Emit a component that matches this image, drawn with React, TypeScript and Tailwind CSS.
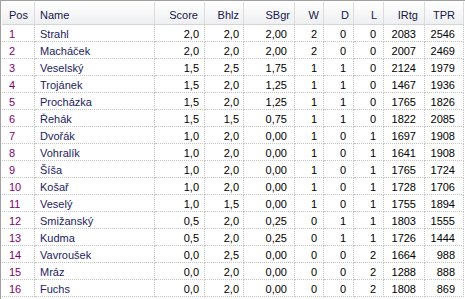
import React from "react";

type Col = { key: string; label: string; w: string; head: string; cell: string };

const cols: Col[] = [
  { key: "pos", label: "Pos", w: "33px", head: "justify-start pl-[7px]", cell: "justify-start pl-[7px] text-[#800070]" },
  { key: "name", label: "Name", w: "120px", head: "justify-start pl-[5px]", cell: "justify-start pl-[5px] text-[#1c1c5e]" },
  { key: "score", label: "Score", w: "50px", head: "justify-end pr-[6px]", cell: "justify-end pr-[5px]" },
  { key: "bhlz", label: "Bhlz", w: "39px", head: "justify-end pr-[4px]", cell: "justify-end pr-[4px]" },
  { key: "sbgr", label: "SBgr", w: "51px", head: "justify-end pr-[4px]", cell: "justify-end pr-[7px]" },
  { key: "w", label: "W", w: "29px", head: "justify-end pr-[4px]", cell: "justify-end pr-[6px]" },
  { key: "d", label: "D", w: "30px", head: "justify-end pr-[4px]", cell: "justify-end pr-[7px]" },
  { key: "l", label: "L", w: "30px", head: "justify-end pr-[6px]", cell: "justify-end pr-[7px]" },
  { key: "irtg", label: "IRtg", w: "41px", head: "justify-end pr-[6px]", cell: "justify-end pr-[8px]" },
  { key: "tpr", label: "TPR", w: "39px", head: "justify-end pr-[8px]", cell: "justify-end pr-[8px]" },
];

const rows: string[][] = [
  ["1", "Strahl", "2,0", "2,0", "2,00", "2", "0", "0", "2083", "2546"],
  ["2", "Macháček", "2,0", "2,0", "2,00", "2", "0", "0", "2007", "2469"],
  ["3", "Veselský", "1,5", "2,5", "1,75", "1", "1", "0", "2124", "1979"],
  ["4", "Trojánek", "1,5", "2,0", "1,25", "1", "1", "0", "1467", "1936"],
  ["5", "Procházka", "1,5", "2,0", "1,25", "1", "1", "0", "1765", "1826"],
  ["6", "Řehák", "1,5", "1,5", "0,75", "1", "1", "0", "1822", "2085"],
  ["7", "Dvořák", "1,0", "2,0", "0,00", "1", "0", "1", "1697", "1908"],
  ["8", "Vohralík", "1,0", "2,0", "0,00", "1", "0", "1", "1641", "1908"],
  ["9", "Šíša", "1,0", "2,0", "0,00", "1", "0", "1", "1765", "1724"],
  ["10", "Košař", "1,0", "2,0", "0,00", "1", "0", "1", "1728", "1706"],
  ["11", "Veselý", "1,0", "1,5", "0,00", "1", "0", "1", "1755", "1894"],
  ["12", "Smižanský", "0,5", "2,0", "0,25", "0", "1", "1", "1803", "1555"],
  ["13", "Kudma", "0,5", "2,0", "0,25", "0", "1", "1", "1726", "1444"],
  ["14", "Vavroušek", "0,0", "2,5", "0,00", "0", "0", "2", "1664", "988"],
  ["15", "Mráz", "0,0", "2,0", "0,00", "0", "0", "2", "1288", "888"],
  ["16", "Fuchs", "0,0", "2,0", "0,00", "0", "0", "2", "1808", "869"],
];

export default function App() {
  return (
    <div
      className="w-[465px] h-[299px] bg-white overflow-hidden text-[11px] text-black"
      style={{ fontFamily: '"Liberation Sans", Arial, sans-serif' }}
    >
      <div className="border-t border-l border-[#a0a0a0] pt-px pl-px h-full">
        <div className="grid grid-cols-[33px_120px_50px_39px_51px_29px_30px_30px_41px_39px]">
          {cols.map((c) => (
            <div
              key={c.key}
              className={`h-[23px] flex items-start pt-[7px] leading-[13px] text-[#16164a] bg-gradient-to-b from-[#ffffff] to-[#eeeff1] border-b border-b-[#d5d5d5] border-r border-r-[#dcdcdc] ${c.head}`}
            >
              {c.label}
            </div>
          ))}
          {rows.map((r, ri) =>
            r.map((v, ci) => (
              <div
                key={`${ri}-${ci}`}
                className={`h-[17px] flex items-start pt-[2px] leading-[14px] border-b border-r border-dotted border-[#c4c4c4] ${cols[ci].cell}`}
              >
                {v}
              </div>
            ))
          )}
        </div>
      </div>
    </div>
  );
}
